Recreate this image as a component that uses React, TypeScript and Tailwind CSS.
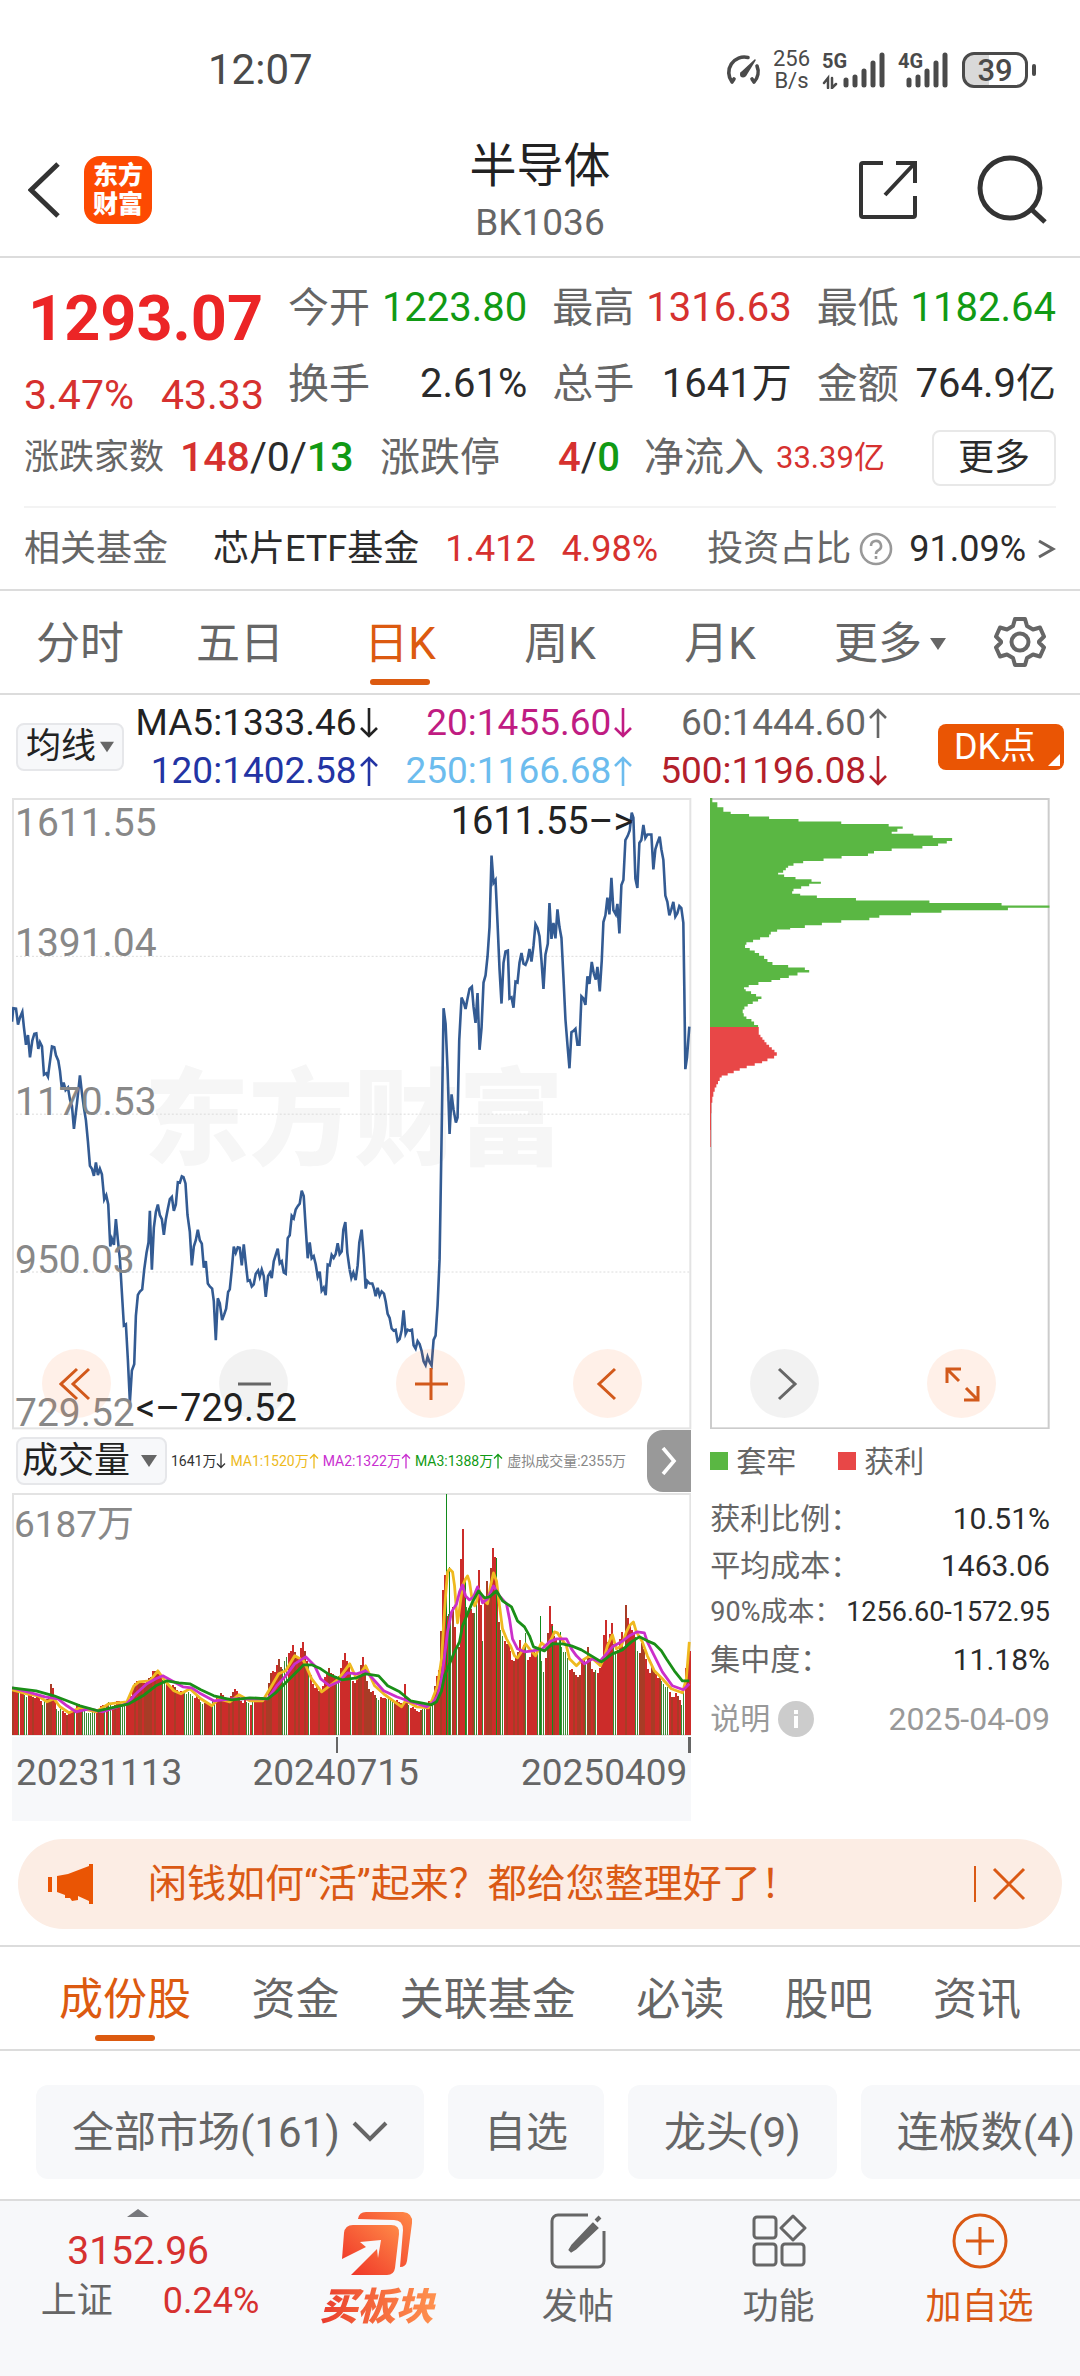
import type { ReactNode } from "react";

const stats = [
  { label: "今开", value: "1223.80", color: "text-[#119a14]" },
  { label: "最高", value: "1316.63", color: "text-[#d6312f]" },
  { label: "最低", value: "1182.64", color: "text-[#119a14]" },
  { label: "换手", value: "2.61%", color: "text-[#2b2b2b]" },
  { label: "总手", value: "1641万", color: "text-[#2b2b2b]" },
  { label: "金额", value: "764.9亿", color: "text-[#2b2b2b]" }
];

const periods = ["分时", "五日", "日K", "周K", "月K"];

const averages = [
  { text: "MA5:1333.46", up: false, color: "text-[#222222]" },
  { text: "20:1455.60", up: false, color: "text-[#c01c82]" },
  { text: "60:1444.60", up: true, color: "text-[#666666]" },
  { text: "120:1402.58", up: true, color: "text-[#2334a4]" },
  { text: "250:1166.68", up: true, color: "text-[#6cbcee]" },
  { text: "500:1196.08", up: false, color: "text-[#b3202a]" }
];

const volumeStats = [
  { text: "1641万", up: false, color: "text-[#333333]" },
  { text: "MA1:1520万", up: true, color: "text-[#edba1c]" },
  { text: "MA2:1322万", up: true, color: "text-[#c92fd0]" },
  { text: "MA3:1388万", up: true, color: "text-[#119a14]" }
];

const costs = [
  { label: "获利比例：", value: "10.51%", size: "text-[30px]" },
  { label: "平均成本：", value: "1463.06", size: "text-[30px]" },
  { label: "90%成本：", value: "1256.60-1572.95", size: "text-[27px]" },
  { label: "集中度：", value: "11.18%", size: "text-[30px]" }
];

const sections = ["成份股", "资金", "关联基金", "必读", "股吧", "资讯"];

// price line, first and second half of the range
const priceA =
  "36,575 40,543 48,544 54,582 60,565 67,552 72,590 78,630 84,607 90,660 97,620 103,604 109,603 115,640 120,624 126,634 132,701 139,698 144,706 150,670 156,634 163,636 168,655 175,668 180,692 186,737 191,720 197,738 204,732 210,760 216,775 222,830 231,770 240,703 246,745 252,780 258,810 264,860 270,918 276,925 282,942 288,910 294,940 300,925 306,938 313,998 319,988 325,1010 331,1110 336,1092 342,1106 348,1045 354,1095 360,1140 366,1220 372,1298 378,1295 384,1380 390,1480 396,1405 403,1390 408,1275 414,1225 420,1217 427,1212 433,1165 440,1125 446,1100 450,1025 456,1165 462,1065 468,1028 474,1010 480,1035 486,1045 492,1082 498,1045 504,1020 510,997 516,992 522,1025 528,1010 534,957 540,958 546,943 551,945 557,960 563,1035 570,1075 576,1155 582,1110 588,1095 594,1070 600,1095 606,1103 612,1160 618,1145 624,1198 630,1205 637,1210 642,1240 648,1333 654,1233 660,1245 667,1285 673,1272 679,1258 685,1218 690,1212 696,1165 702,1110 708,1125 714,1112 720,1113 726,1155 732,1105 738,1150 744,1192 750,1190 756,1205 762,1200 768,1175 775,1167 780,1182 786,1165 792,1180 798,1230 805,1180 811,1172 816,1185 822,1145 828,1130 834,1115 840,1150 846,1145 852,1172 858,1175 864,1090 870,1083 876,1037 882,1043 888,1022 894,1014 900,1008 906,977 912,990 918,1065 924,1138 930,1100 936,1138 942,1133 948,1152 954,1182 960,1170 966,1215 972,1208 978,1226 984,1153 990,1155 996,1130 1002,1137 1008,1128 1014,1102 1020,1128 1026,1122 1031,1070 1037,1052 1043,1125 1050,1165";
const priceB =
  "0,1165 5,1185 11,1172 18,1190 24,1155 29,1100 36,1070 42,1130 48,1210 53,1192 60,1198 68,1198 73,1210 78,1228 84,1208 90,1227 96,1217 103,1222 108,1240 114,1270 120,1280 126,1305 132,1310 138,1308 144,1335 150,1330 156,1310 162,1262 168,1318 174,1308 180,1310 187,1308 192,1345 198,1353 204,1335 210,1342 216,1358 222,1383 228,1392 234,1372 240,1385 246,1393 252,1332 258,1322 264,1250 270,1140 273,1000 277,800 282,543 288,580 294,690 300,842 306,748 312,785 319,815 324,803 329,620 336,518 342,528 348,545 354,520 360,497 367,492 372,540 378,578 384,507 390,642 396,590 402,482 408,465 414,420 420,350 426,180 432,245 438,238 444,340 450,450 456,532 462,435 468,408 475,406 480,520 486,517 492,542 498,480 504,482 510,435 516,412 522,437 528,440 534,428 540,402 546,432 552,395 558,343 564,352 570,372 576,430 582,497 588,415 595,390 600,293 606,378 612,340 618,377 624,308 630,350 636,376 642,470 648,570 654,630 660,686 666,600 672,597 678,592 684,630 690,630 696,515 702,520 708,535 714,467 720,485 727,433 733,460 739,475 744,445 751,503 757,430 762,338 768,322 774,280 780,320 786,233 792,310 799,320 804,295 810,365 816,250 822,238 828,143 835,133 841,120 847,78 852,90 858,235 864,257 870,150 876,143 882,107 888,138 894,130 906,130 912,213 918,165 924,150 931,135 936,165 942,190 948,275 954,290 960,322 966,308 972,290 978,325 984,317 990,300 996,305 1002,340 1005,500 1008,688 1013,660 1020,587";

// cost distribution: [width, price level]
const trapped = [
  [70, 50], [85, 62], [103, 73], [125, 78], [180, 84], [240, 90], [328, 96], [456, 102], [598, 108], [640, 113], [624, 120], [607, 125],
  [672, 129], [730, 135], [788, 142], [772, 148], [746, 154], [699, 160], [607, 166], [554, 172], [536, 178], [457, 184], [403, 190],
  [342, 195], [313, 201], [297, 206], [290, 212], [282, 218], [267, 222], [285, 228], [319, 233], [367, 239], [395, 244], [360, 250],
  [336, 256], [313, 262], [309, 268], [333, 272], [383, 278], [500, 284], [720, 290], [936, 296], [1080, 301], [955, 307], [756, 313],
  [665, 319], [570, 325], [540, 331], [456, 337], [398, 343], [347, 349], [303, 353], [264, 358], [245, 365], [240, 371], [213, 377],
  [192, 383], [172, 389], [168, 397], [182, 403], [197, 409], [210, 415], [225, 423], [235, 430], [250, 437], [297, 443], [347, 449],
  [360, 455], [325, 462], [299, 468], [273, 473], [247, 478], [208, 485], [179, 490], [165, 495], [170, 500], [186, 506], [201, 512],
  [217, 518], [207, 524], [191, 530], [176, 536], [166, 543], [161, 552], [164, 560], [172, 566], [187, 572], [195, 580], [207, 585]
];
const profit = [
  [209, 603], [214, 609], [220, 615], [226, 621], [232, 627], [240, 633], [248, 639], [256, 645], [263, 653], [255, 660], [235, 666],
  [219, 671], [197, 677], [173, 683], [152, 689], [134, 695], [116, 700], [98, 705], [92, 713], [87, 721], [82, 729], [77, 739],
  [73, 751], [70, 765], [67, 790], [66, 830], [65, 870]
];
const steps = (top: number, rows: number[][]) => `M63 ${top}${rows.map(([x, y]) => `H${x}V${y + 3}`).join("")}H63Z`;

// volume outline: [x, height]
const volume = [
  [0, 48], [15, 41], [26, 39], [30, 33], [36, 39], [38, 54], [41, 43], [44, 28], [55, 23], [66, 32], [73, 23], [86, 27], [94, 34],
  [100, 31], [105, 35], [113, 31], [117, 39], [121, 50], [123, 56], [131, 53], [138, 59], [141, 69], [144, 64], [149, 59], [153, 53],
  [162, 49], [167, 44], [175, 44], [184, 39], [193, 31], [202, 36], [207, 43], [216, 36], [222, 49], [227, 36], [238, 33], [249, 39],
  [254, 39], [257, 59], [259, 66], [263, 66], [266, 77], [269, 66], [276, 84], [280, 90], [285, 76], [290, 94], [296, 69], [300, 53],
  [307, 44], [316, 69], [321, 59], [327, 63], [332, 84], [336, 69], [341, 53], [346, 63], [350, 81], [355, 49], [365, 38], [376, 39],
  [385, 34], [390, 34], [392, 51], [394, 34], [401, 27], [408, 25], [417, 35], [420, 34], [422, 52], [424, 59], [427, 70], [429, 142],
  [432, 160], [434, 120], [439, 128], [441, 128], [443, 89], [446, 91], [448, 176], [450, 207], [452, 155], [454, 131], [457, 125],
  [459, 128], [461, 120], [463, 130], [466, 166], [468, 132], [470, 97], [472, 132], [474, 155], [476, 145], [478, 170], [480, 187],
  [483, 175], [485, 124], [487, 108], [491, 97], [496, 92], [500, 77], [505, 78], [508, 97], [511, 84], [514, 103], [516, 77],
  [520, 84], [528, 84], [532, 65], [535, 88], [538, 130], [541, 105], [546, 92], [549, 100], [551, 82], [555, 85], [558, 68],
  [565, 61], [568, 60], [571, 85], [573, 68], [576, 88], [580, 68], [586, 63], [590, 75], [592, 100], [594, 116], [596, 95],
  [600, 112], [603, 82], [606, 88], [610, 104], [612, 90], [614, 133], [616, 117], [619, 108], [622, 105], [624, 98], [627, 78],
  [630, 95], [635, 73], [637, 63], [640, 68], [650, 55], [655, 50], [660, 40], [665, 42], [670, 33], [673, 55], [675, 80], [680, 92]
];
const quiet = [
  [6, 7], [13, 14], [31, 32], [44, 49], [62, 63], [71, 82], [92, 93], [97, 98], [109, 112], [151, 152], [173, 180], [189, 190],
  [200, 203], [235, 236], [240, 241], [271, 274], [296, 297], [325, 326], [338, 339], [365, 366], [374, 381], [396, 397], [410, 413],
  [419, 420], [436, 438], [444, 445], [454, 455], [463, 464], [470, 471], [488, 490], [514, 515], [527, 532], [549, 557], [574, 575],
  [584, 585], [603, 604], [624, 626], [651, 657], [671, 672]
];
const peaks = [
  [434, 241], [437, 168], [453, 158], [484, 177], [529, 119], [541, 109], [549, 103]
];

function heightAt(x: number) {
  const i = Math.max(1, volume.findIndex(([vx]) => vx >= x));
  const [x0, h0] = volume[i - 1];
  const [x1, h1] = volume[i];
  return h0 + ((h1 - h0) * (x - x0)) / (x1 - x0);
}

const bars = Array.from({ length: 340 }, (_, i) => {
  const x = i * 2;
  const rising = (i * 7 + ((i * i) % 11)) % 10 > 2;
  return {
    x,
    h: Math.round(heightAt(x) - ((i * 5) % 4)),
    calm: quiet.some(([a, b]) => x + 1 >= a && x <= b),
    fill: rising ? "#cc2c2a" : "#a83c26"
  };
});

const ma1 =
  "0,197 15,201 26,203 35,209 42,206 48,214 57,220 68,215 84,219 97,211 115,209 122,193 127,189 138,188 146,178 153,188 162,198 169,201 178,196 189,206 200,213 207,206 218,209 227,202 238,208 251,208 260,193 267,181 274,178 283,163 292,168 300,186 310,199 318,193 327,186 338,171 345,186 354,173 363,193 372,201 383,209 390,214 394,208 405,214 417,215 421,206 426,193 430,166 432,133 434,103 436,79 438,76 441,79 443,93 445,119 446,130 448,116 451,93 454,86 456,83 458,89 460,103 463,113 465,109 467,96 470,103 473,108 476,111 479,93 482,80 485,88 488,113 491,136 495,146 499,153 503,163 506,165 510,159 514,151 518,156 524,163 530,150 535,154 540,146 543,139 546,140 550,146 555,153 558,166 565,173 570,168 578,163 589,173 593,164 596,153 601,142 605,156 610,153 615,139 618,133 622,129 625,139 631,149 636,163 643,178 651,186 660,196 671,200 675,186 678,149";
const ma2 =
  "0,195 19,200 33,204 46,206 55,213 64,219 77,216 91,219 115,211 124,201 135,191 144,186 151,183 160,188 171,194 180,195 189,201 202,208 220,206 238,206 256,206 265,193 274,183 283,171 294,164 303,173 309,186 318,193 327,189 336,180 345,181 354,178 363,188 372,198 385,204 399,209 415,214 421,210 426,203 430,186 433,163 436,139 440,119 445,111 448,99 451,92 454,103 458,107 462,104 466,94 471,110 476,106 482,93 488,103 495,111 498,126 501,146 506,156 513,159 521,158 531,156 538,149 545,146 555,146 560,156 565,163 573,171 581,166 588,169 595,161 601,154 610,149 618,143 626,139 633,140 636,149 643,163 651,179 661,193 672,197 678,191";
const ma3 =
  "0,195 24,198 42,203 55,208 68,213 86,218 104,214 117,211 131,203 144,193 155,188 167,190 178,191 189,197 202,203 220,207 238,205 256,206 265,199 278,186 292,172 300,172 309,176 318,182 330,187 345,185 354,181 367,183 376,193 388,199 399,208 420,212 425,209 430,198 433,183 438,171 443,159 448,149 451,133 456,121 461,109 467,98 473,105 478,104 485,98 491,108 500,114 506,128 513,134 518,143 522,154 533,158 541,151 551,151 560,153 570,157 580,163 590,169 601,161 611,157 620,149 628,144 636,148 643,151 650,158 655,166 663,178 671,188 678,188";

function Arrow({ up, className }: { up: boolean; className: string }) {
  return (
    <svg viewBox="0 0 20 32" className={className} fill="none" stroke="currentColor" strokeWidth="2.6">
      <path d={up ? "M10 31V3M2 11l8-8 8 8" : "M10 1v28M2 21l8 8 8-8"} />
    </svg>
  );
}

function Caret({ className }: { className: string }) {
  return (
    <svg viewBox="0 0 16 12" className={className} fill="#666666">
      <path d="M0 0h16L8 12z" />
    </svg>
  );
}

function StatusBar() {
  return (
    <div className="flex h-[140px] items-center justify-between pr-[44px] pl-[208px] text-[#4a4a4a]">
      <span className="text-[42px] leading-none">12:07</span>
      <div className="flex items-center gap-3">
        <svg viewBox="0 0 36 32" className="h-8 w-9" fill="none" stroke="currentColor" strokeWidth="3.600" strokeLinecap="round">
          <path d="M7 28A15.500 15.500 0 0 1 23 3.500M32 12a15 15 0 0 1-3 16M7 28l2-3M29 28l-2-3" />
          <path d="M30 6 20.500 21.500 16 19z" fill="currentColor" strokeWidth="1.500" strokeLinejoin="round" />
          <circle cx="18" cy="20.500" r="3" fill="currentColor" stroke="none" />
        </svg>
        <div className="text-center text-[22px] leading-[22px]">
          <div>256</div>
          <div>B/s</div>
        </div>
        <div className="relative h-[38px] w-[64px]">
          <span className="absolute top-0 left-0 text-[20px] leading-5 font-bold">5G</span>
          <svg viewBox="0 0 64 38" className="h-full w-full" stroke="currentColor" strokeWidth="5" strokeLinecap="round">
            <path d="M24 34v-5M33 34v-8M42 34V20M51 34V12M60 34V4" />
            <path d="M6 37V27l-4 5M10 27v10l4-4" strokeWidth="2.500" fill="none" />
          </svg>
        </div>
        <div className="relative h-[38px] w-[52px]">
          <span className="absolute top-0 left-0 text-[20px] leading-5 font-bold">4G</span>
          <svg viewBox="0 0 52 38" className="h-full w-full" stroke="currentColor" strokeWidth="5" strokeLinecap="round">
            <path d="M11 34v-5M20 34v-8M29 34V20M38 34V12M47 34V4" />
          </svg>
        </div>
        <div className="flex items-center gap-1">
          <div className="flex h-9 w-[66px] items-center justify-center rounded-xl border-[3px] border-[#4a4a4a] bg-linear-to-r from-[#d9d9d9] from-40% to-white to-40% text-[31px] leading-none font-medium">
            39
          </div>
          <span className="h-3 w-1 rounded-full bg-[#4a4a4a]" />
        </div>
      </div>
    </div>
  );
}

function Header() {
  return (
    <header className="flex h-[118px] items-center justify-between border-b-2 border-[#dcdcdc] px-7 pb-4">
      <div className="flex flex-1 items-center gap-5">
        <button aria-label="返回">
          <svg viewBox="0 0 36 56" className="h-14 w-9" fill="none" stroke="#333333" strokeWidth="5">
            <path d="M30 2 3 28l27 26" />
          </svg>
        </button>
        <div className="flex h-[68px] w-[68px] flex-col items-center justify-center rounded-2xl bg-[#fd4a02] text-[25px] leading-[29px] font-black text-white">
          <span>东方</span>
          <span>财富</span>
        </div>
      </div>
      <div className="pt-2 text-center">
        <h1 className="text-[47px] leading-[58px] text-[#222222]">半导体</h1>
        <p className="text-[37px] leading-[56px] text-[#666666]">BK1036</p>
      </div>
      <div className="flex flex-1 items-center justify-end gap-[58px]">
        <button aria-label="分享">
          <svg viewBox="0 0 60 60" className="h-[60px] w-[60px]" fill="none" stroke="#333333" strokeWidth="4">
            <path d="M25 3H5a2 2 0 0 0-2 2v50a2 2 0 0 0 2 2h50a2 2 0 0 0 2-2V36M38 3h19v20M57 3 27 35" />
          </svg>
        </button>
        <button aria-label="搜索">
          <svg viewBox="0 0 76 70" className="h-[70px] w-[76px]" fill="none" stroke="#333333" strokeWidth="5">
            <circle cx="34" cy="33" r="30" />
            <path d="M55 54 69 67" />
          </svg>
        </button>
      </div>
    </header>
  );
}

function Quote() {
  return (
    <section className="border-b-2 border-[#dcdcdc] px-6 pt-3 text-[40px]">
      <div className="flex">
        <div className="w-[264px]">
          <p className="pl-1 text-[63px] leading-[98px] font-bold text-[#ec2526]">1293.07</p>
          <p className="flex gap-[27px] text-[41px] leading-[54px] text-[#d6312f]">
            <span>3.47%</span>
            <span>43.33</span>
          </p>
        </div>
        <dl className="grid flex-1 grid-cols-3 gap-x-[25px]">
          {stats.map((item) => (
            <div key={item.label} className="flex justify-between leading-[76px] whitespace-nowrap">
              <dt className="text-[41px] text-[#666666]">{item.label}</dt>
              <dd className={item.color}>{item.value}</dd>
            </div>
          ))}
        </dl>
      </div>
      <div className="flex h-[72px] items-center whitespace-nowrap text-[#666666]">
        <span className="text-[35px]">涨跌家数</span>
        <span className="ml-4 w-[176px] text-[41px] text-[#2b2b2b]">
          <b className="font-medium text-[#d6312f]">148</b>/0/<b className="font-medium text-[#119a14]">13</b>
        </span>
        <span className="ml-6 text-[40px]">涨跌停</span>
        <span className="w-[120px] text-right text-[#2b2b2b]">
          <b className="font-medium text-[#d6312f]">4</b>/<b className="font-medium text-[#119a14]">0</b>
        </span>
        <span className="ml-6 text-[40px]">净流入</span>
        <span className="ml-3 text-[31px] text-[#d6312f]">33.39亿</span>
        <button className="ml-auto h-14 rounded-lg border-2 border-[#e8e8e8] px-6 text-[36px] leading-none text-[#2b2b2b]">更多</button>
      </div>
      <div className="mt-3 flex h-[83px] items-center border-t-2 border-[#f3f3f3] text-[36px] whitespace-nowrap text-[#666666]">
        <span>相关基金</span>
        <a href="#fund" className="ml-[45px] text-[#2b2b2b]">芯片ETF基金</a>
        <span className="ml-[26px] text-[#d6312f]">1.412</span>
        <span className="ml-[26px] text-[#d6312f]">4.98%</span>
        <a href="#ratio" className="ml-auto flex items-center">
          投资占比
          <svg viewBox="0 0 34 34" className="ml-2 h-[34px] w-[34px]" fill="none" stroke="#999999" strokeWidth="2.6">
            <circle cx="17" cy="17" r="15" />
            <path d="M12 14a5 5 0 1 1 7.500 4.200Q17 19.500 17 22M17 24v3" />
          </svg>
          <span className="ml-4 text-[#2b2b2b]">91.09%</span>
          <svg viewBox="0 0 18 22" className="ml-3 h-[22px] w-[18px]" fill="none" stroke="#666666" strokeWidth="3">
            <path d="m1 3 14 8L1 19" />
          </svg>
        </a>
      </div>
    </section>
  );
}

function PeriodTabs() {
  return (
    <nav className="grid h-[104px] grid-cols-[8fr_8fr_8fr_8fr_8fr_9fr_5fr] border-b-2 border-[#dcdcdc] text-[44px] text-[#666666]">
      {periods.map((name) => (
        <button key={name} className={`relative pt-1 ${name === "日K" ? "text-[#dc5a10]" : ""}`}>
          {name}
          {name === "日K" && <span className="absolute bottom-2 left-1/2 h-[6px] w-[60px] -translate-x-1/2 rounded-sm bg-[#dc5a10]" />}
        </button>
      ))}
      <button className="flex items-center justify-center gap-2 pt-1">
        更多
        <Caret className="h-3 w-4" />
      </button>
      <button aria-label="设置" className="flex items-center justify-center pr-5">
        <svg viewBox="0 0 52 52" className="h-[52px] w-[52px]" fill="none" stroke="#666666" strokeWidth="4">
          <path d="M21 3h10l2 7 6 3.500 7-2 4 9-5 5v1l5 5-4 9-7-2-6 3.500-2 7H21l-2-7-6-3.500-7 2-4-9 5-5v-1l-5-5 4-9 7 2 6-3.500z" strokeLinejoin="round" />
          <circle cx="26" cy="26" r="8.500" />
        </svg>
      </button>
    </nav>
  );
}

function Averages() {
  return (
    <div className="flex h-[103px] items-center pr-4 pl-4 text-[37px]">
      <label className="relative flex h-[48px] w-[108px] items-center rounded-lg border-2 border-[#e6e7ea] bg-[#f7f8fa]">
        <select aria-label="均线" className="w-full appearance-none pl-2 text-[35px] leading-[44px] text-[#222222]">
          <option>均线</option>
        </select>
        <Caret className="pointer-events-none absolute right-2 h-3 w-[14px]" />
      </label>
      <div className="grid flex-1 grid-cols-3">
        {averages.map((item) => (
          <span key={item.text} className={`flex items-center justify-end gap-[2px] leading-[48px] ${item.color}`}>
            {item.text}
            <Arrow up={item.up} className="h-8 w-5" />
          </span>
        ))}
      </div>
      <button className="relative ml-[50px] h-[46px] w-[126px] rounded-lg bg-[#ea5504] pr-3 text-[36px] leading-none text-white">
        DK点
        <svg viewBox="0 0 12 12" className="absolute right-1 bottom-1 h-3 w-3" fill="#ffffff">
          <path d="M12 0v12H0z" />
        </svg>
      </button>
    </div>
  );
}

function PriceChart() {
  return (
    <svg viewBox="0 0 680 632" className="block w-full overflow-visible text-[39px]">
      <text x="342" y="358" textAnchor="middle" className="fill-[#f6f6f6] text-[105px] font-black">东方财富</text>
      <g stroke="#dcdcdc" strokeWidth="1" strokeDasharray="2 2">
        <path d="M0 158.500H680M0 316.500H680M0 474.500H680" />
      </g>
      <rect x="1" y="1" width="678" height="630" fill="none" stroke="#e3e3e3" strokeWidth="2" />
      <svg x="0" y="0" width="680" height="632" viewBox="36 43 2040 1502" preserveAspectRatio="none" fill="none" stroke="#335b93">
        <polyline points={priceA} vectorEffect="non-scaling-stroke" strokeWidth="2.6" />
        <g transform="translate(1050 0)">
          <polyline points={priceB} vectorEffect="non-scaling-stroke" strokeWidth="2.6" />
        </g>
      </svg>
      <g className="fill-[#888888]">
        <text x="3" y="38">1611.55</text>
        <text x="3" y="158">1391.04</text>
        <text x="3" y="317">1170.53</text>
        <text x="3" y="475">950.03</text>
        <text x="3" y="629">729.52</text>
      </g>
      <g className="fill-[#222222] text-[38px]">
        <text x="622" y="36" textAnchor="end">1611.55–&gt;</text>
        <text x="124" y="624">&lt;–729.52</text>
      </g>
    </svg>
  );
}

function CostChart() {
  return (
    <svg viewBox="0 0 340 632" className="block w-full">
      <rect x="1" y="1" width="338" height="630" fill="none" stroke="#cccccc" strokeWidth="2" />
      <svg x="0" y="0" width="340" height="632" viewBox="63 43 1017 1502" preserveAspectRatio="none">
        <path d={steps(43, trapped)} fill="#5ab743" />
        <path d={steps(588, profit)} fill="#e84747" />
      </svg>
    </svg>
  );
}

function RoundButton({ label, tone, children }: { label: string; tone: "warm" | "grey"; children: ReactNode }) {
  return (
    <button
      aria-label={label}
      className={`pointer-events-auto flex h-[69px] w-[69px] items-center justify-center rounded-full ${
        tone === "warm" ? "bg-[#ff6a1a]/10 text-[#d2591b]" : "bg-black/5 text-[#666666]"
      }`}
    >
      <svg viewBox="0 0 36 36" className="h-9 w-9" fill="none" stroke="currentColor" strokeWidth="3">
        {children}
      </svg>
    </button>
  );
}

function ChartControls() {
  return (
    <div className="pointer-events-none absolute inset-x-0 bottom-0 flex justify-between pr-[84px] pb-[11px] pl-[42px]">
      <RoundButton label="最左" tone="warm">
        <path d="M18 3 2 18l16 15M30 3 14 18l16 15" />
      </RoundButton>
      <RoundButton label="缩小" tone="grey">
        <path d="M2 18h33" />
      </RoundButton>
      <RoundButton label="放大" tone="warm">
        <path d="M2 18h33M18 2v32" />
      </RoundButton>
      <RoundButton label="左移" tone="warm">
        <path d="M25 3 9 18l16 15" />
      </RoundButton>
      <RoundButton label="右移" tone="grey">
        <path d="m12 3 16 15-16 15" />
      </RoundButton>
      <RoundButton label="全屏" tone="warm">
        <path d="M3 17V3h14M3 3l12 12M34 20v14H20M34 34 22 22" />
      </RoundButton>
    </div>
  );
}

function VolumePanel() {
  return (
    <div>
      <div className="flex h-[64px] items-center">
        <label className="relative ml-1 flex h-12 w-[151px] shrink-0 items-center rounded-lg border-2 border-[#e6e7ea] bg-[#f7f8fa]">
          <select aria-label="指标" className="w-full appearance-none pl-1 text-[36px] leading-[44px] text-[#222222]">
            <option>成交量</option>
          </select>
          <Caret className="pointer-events-none absolute right-2 h-3 w-4" />
        </label>
        <div className="ml-1 flex items-center gap-1 text-[14px] whitespace-nowrap">
          {volumeStats.map((item) => (
            <span key={item.text} className={`flex items-center ${item.color}`}>
              {item.text}
              <Arrow up={item.up} className="h-4 w-[10px]" />
            </span>
          ))}
          <span className="text-[#888888]">虚拟成交量:2355万</span>
        </div>
        <button aria-label="展开" className="ml-auto flex h-[62px] w-11 items-center justify-center rounded-l-2xl bg-[#999999]">
          <svg viewBox="0 0 16 28" className="h-7 w-4" fill="none" stroke="#ffffff" strokeWidth="3.6">
            <path d="m2 1 11 13L2 27" />
          </svg>
        </button>
      </div>
      <svg viewBox="0 0 680 243" className="block w-full">
        <rect x="1" y="1" width="678" height="241" fill="none" stroke="#e3e3e3" strokeWidth="2" />
        {bars.map((bar) => (
          <rect key={bar.x} x={bar.x} y={242 - bar.h} width={bar.calm ? 1 : 2} height={bar.h} fill={bar.calm ? "#3b8a34" : bar.fill} shapeRendering="crispEdges" />
        ))}
        {peaks.map(([x, h]) => (
          <rect key={x} x={x} y={242 - h} width="1" height={h} fill="#128a1c" shapeRendering="crispEdges" />
        ))}
        <g fill="none" strokeWidth="2.8" strokeLinejoin="round">
          <polyline points={ma1} stroke="#efb920" />
          <polyline points={ma2} stroke="#cb2fca" />
          <polyline points={ma3} stroke="#1a8f17" />
        </g>
        <text x="2" y="44" className="fill-[#888888] text-[37px]">6187万</text>
      </svg>
      <div className="relative mt-[1px] flex h-[84px] justify-between bg-[#f7f8fa] px-1 pt-3 text-[37px] leading-[48px] text-[#666666]">
        <span className="absolute top-0 left-[324px] h-4 w-[2px] bg-[#666666]" />
        <span className="absolute top-0 right-0 h-4 w-[3px] bg-[#666666]" />
        <span>20231113</span>
        <span className="mr-[32px]">20240715</span>
        <span>20250409</span>
      </div>
    </div>
  );
}

function CostPanel() {
  return (
    <div className="text-[30px] text-[#666666]">
      <div className="flex h-[64px] items-center gap-[42px]">
        <span className="flex items-center gap-2">
          <i className="h-[18px] w-[18px] bg-[#5ab743]" />
          套牢
        </span>
        <span className="flex items-center gap-2">
          <i className="h-[18px] w-[18px] bg-[#e84747]" />
          获利
        </span>
      </div>
      <dl className="pt-[2px] leading-[47px] whitespace-nowrap">
        {costs.map((item) => (
          <div key={item.label} className={`flex justify-between ${item.size}`}>
            <dt>{item.label}</dt>
            <dd className="text-[#2b2b2b]">{item.value}</dd>
          </div>
        ))}
      </dl>
      <div className="mt-3 flex items-center leading-[48px] text-[#999999]">
        说明
        <svg viewBox="0 0 36 36" className="ml-2 h-9 w-9">
          <circle cx="18" cy="18" r="18" fill="#cccccc" />
          <path d="M18 9v4M18 15v12" stroke="#ffffff" strokeWidth="4" />
        </svg>
        <time className="ml-auto text-[32px]">2025-04-09</time>
      </div>
    </div>
  );
}

function Banner() {
  return (
    <div className="mx-[18px] mt-[18px] flex h-[90px] items-center rounded-full bg-[#fcede4] pr-[36px] pl-[30px] text-[#da5914]">
      <svg viewBox="0 0 46 40" className="h-10 w-[46px]" fill="#ea5504">
        <path d="M0 13h4v15H0zM9 12l11-2L41 2V0h4v40h-4v-3l-11-5v4l-6 1-2-3h-5v-3l-8-3z" />
      </svg>
      <p className="ml-[54px] text-[39px] leading-none">闲钱如何“活”起来？都给您整理好了！</p>
      <span className="ml-auto h-9 w-[2px] bg-[#da5914]" />
      <button aria-label="关闭" className="ml-4">
        <svg viewBox="0 0 34 34" className="h-[34px] w-[34px]" fill="none" stroke="currentColor" strokeWidth="3">
          <path d="m2 2 30 30M32 2 2 32" />
        </svg>
      </button>
    </div>
  );
}

function SectionTabs() {
  return (
    <nav className="mt-4 flex h-[106px] justify-between border-y-2 border-[#dcdcdc] px-[59px] text-[44px] text-[#666666]">
      {sections.map((name, i) => (
        <button key={name} className={`relative pt-1 ${i === 0 ? "text-[#dc5a10]" : ""}`}>
          {name}
          {i === 0 && <span className="absolute bottom-2 left-1/2 h-[6px] w-[60px] -translate-x-1/2 rounded-sm bg-[#dc5a10]" />}
        </button>
      ))}
    </nav>
  );
}

function Filters() {
  return (
    <div className="flex gap-6 overflow-hidden pt-[34px] pb-[20px] pl-9 text-[42px] whitespace-nowrap text-[#666666]">
      <label className="relative flex h-[94px] shrink-0 items-center rounded-xl bg-[#f7f8fa]">
        <select aria-label="市场" className="h-full appearance-none pr-[84px] pl-9">
          <option>全部市场(161)</option>
        </select>
        <svg viewBox="0 0 36 22" className="pointer-events-none absolute right-9 h-[22px] w-9" fill="none" stroke="currentColor" strokeWidth="4">
          <path d="m2 2 16 16L34 2" />
        </svg>
      </label>
      {["自选", "龙头(9)", "连板数(4)"].map((name) => (
        <button key={name} className="h-[94px] shrink-0 rounded-xl bg-[#f7f8fa] px-9">
          {name}
        </button>
      ))}
    </div>
  );
}

function BottomBar() {
  return (
    <footer className="grid min-h-[174px] grow grid-cols-[11fr_8fr_8fr_8fr_8fr] border-t-2 border-[#dcdcdc] bg-[#f7f8fa] text-[36px] text-[#666666]">
      <div className="flex flex-col items-center">
        <svg viewBox="0 0 22 8" className="mt-2 h-2 w-[22px]" fill="#77787c">
          <path d="M11 0 22 8H0z" />
        </svg>
        <span className="mt-2 text-[39px] leading-[52px] text-[#d6312f]">3152.96</span>
        <span className="flex gap-[50px] pl-6 leading-[48px]">
          上证<em className="text-[#d6312f] not-italic">0.24%</em>
        </span>
      </div>
      <button className="flex flex-col items-center">
        <svg viewBox="0 0 72 66" className="mt-[10px] h-[66px] w-[72px]">
          <defs>
            <linearGradient id="card" x1="0" y1="1" x2="1" y2="0">
              <stop offset="0" stopColor="#ee2f25" />
              <stop offset="1" stopColor="#ff8a48" />
            </linearGradient>
          </defs>
          <path d="M17 8q1-7 8-7h37q10 1 9 11l-5 38q-1 6-7 6l3-37q0-10-9-10z" fill="url(#card)" />
          <path d="M3 22q1-8 9-8h38q9 0 8 9l-4 34q-1 7-8 7H10l26-26 1 9 3-18-21 2 6 5L1 48z" fill="url(#card)" />
        </svg>
        <span className="mt-2 bg-linear-to-r from-[#e8352b] to-[#ff9350] bg-clip-text px-1 text-[38px] leading-[44px] font-black text-transparent italic">买板块</span>
      </button>
      <button className="flex flex-col items-center">
        <svg viewBox="0 0 56 56" className="mt-3 h-14 w-14" fill="none" stroke="#666666" strokeWidth="3">
          <path d="M38 2H8a6 6 0 0 0-6 6v40a6 6 0 0 0 6 6h40a6 6 0 0 0 6-6V18" />
          <path d="M50 4 46 8M43 12 23 33l-3 5 5-3 21-20z" fill="#666666" strokeWidth="4" />
        </svg>
        <span className="mt-[14px] leading-[48px]">发帖</span>
      </button>
      <button className="flex flex-col items-center">
        <svg viewBox="0 0 56 56" className="mt-3 h-14 w-14" fill="none" stroke="#666666" strokeWidth="3">
          <rect x="3" y="4" width="22" height="21" rx="3" />
          <rect x="3" y="31" width="22" height="21" rx="3" />
          <rect x="31" y="31" width="22" height="21" rx="3" />
          <path d="m42 3 12 12-12 12-12-12z" strokeLinejoin="round" />
        </svg>
        <span className="mt-[14px] leading-[48px]">功能</span>
      </button>
      <button className="flex flex-col items-center text-[#da5914]">
        <svg viewBox="0 0 56 56" className="mt-3 h-14 w-14" fill="none" stroke="currentColor" strokeWidth="3">
          <circle cx="28" cy="28" r="26" />
          <path d="M14 28h28M28 14v28" />
        </svg>
        <span className="mt-[14px] leading-[48px]">加自选</span>
      </button>
    </footer>
  );
}

export default function App() {
  return (
    <div className="flex min-h-screen w-full flex-col bg-white font-['Roboto','Noto_Sans_CJK_SC',sans-serif]">
      <StatusBar />
      <Header />
      <Quote />
      <PeriodTabs />
      <Averages />
      <div className="relative grid grid-cols-[2fr_1fr] gap-[19px] pr-[30px] pl-3">
        <PriceChart />
        <CostChart />
        <ChartControls />
      </div>
      <div className="grid grid-cols-[2fr_1fr] gap-[19px] pr-[30px] pl-3">
        <VolumePanel />
        <CostPanel />
      </div>
      <Banner />
      <SectionTabs />
      <Filters />
      <BottomBar />
    </div>
  );
}
